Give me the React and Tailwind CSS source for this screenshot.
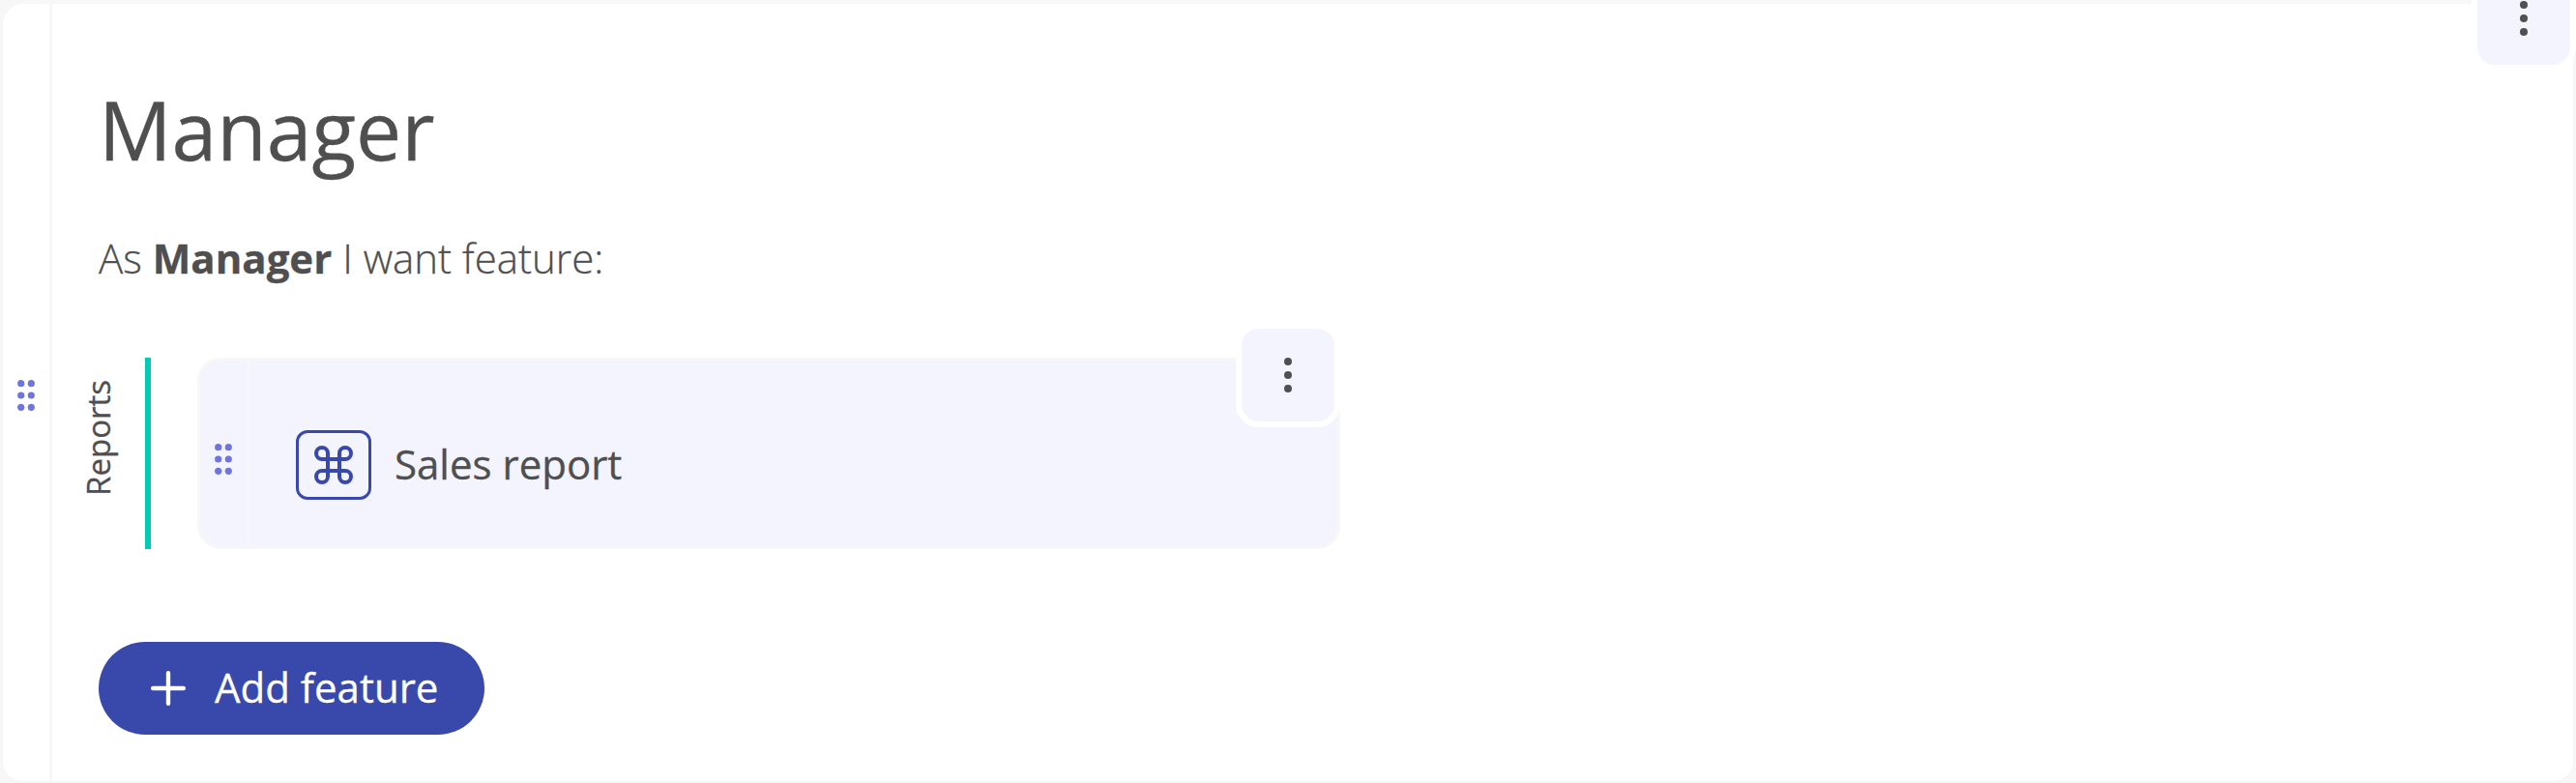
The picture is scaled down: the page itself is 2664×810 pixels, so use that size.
import { Command } from "lucide-react";

function DragDots() {
  return (
    <svg className="block h-[34px] w-[20px]" viewBox="0 0 20 34" fill="#7075de">
      {[4.7, 17, 29.3].map((y) => (
        <g key={y}>
          <circle cx="4.7" cy={y} r="3.6" />
          <circle cx="15.3" cy={y} r="3.6" />
        </g>
      ))}
    </svg>
  );
}

function MenuButton({ className }) {
  return (
    <button
      aria-label="Options"
      className={
        "absolute flex size-[108px] items-center justify-center rounded-[24px] border-6 border-white bg-[#f3f4fd] " +
        className
      }
    >
      <svg className="block h-9 w-2" viewBox="0 0 8 36" fill="#505050">
        <circle cx="4" cy="4" r="4" />
        <circle cx="4" cy="18" r="4" />
        <circle cx="4" cy="32" r="4" />
      </svg>
    </button>
  );
}

function FeatureCard() {
  return (
    <div className="relative ml-12 flex h-[198px] w-[1182px] rounded-[24px] border-3 border-[#f7f7f7] bg-[#f3f4fd]">
      <div className="flex w-[51px] shrink-0 justify-center border-r-3 border-[#f7f7f7] pt-[85px]">
        <DragDots />
      </div>
      <div className="flex items-start pt-[72px] pl-12">
        <div className="flex h-[72px] w-[78px] items-center justify-center rounded-[12px] border-3 border-[#3949ab]">
          <Command size={48} strokeWidth={2} color="#3949ab" />
        </div>
        <span className="-mt-px ml-6 text-[42px] leading-[71px]">Sales report</span>
      </div>
      <MenuButton className="-top-[39px] -right-[3px]" />
    </div>
  );
}

export default function App() {
  return (
    <div className="h-[810px] w-[2664px] overflow-hidden bg-[#f7f7f7] pt-px font-['Open_Sans',sans-serif] text-[#4f4f4f] [-webkit-text-stroke:0.3px]">
      <div className="relative flex h-[810px] w-[2664px] rounded-[24px] border-3 border-[#f7f7f7] bg-white">
        <div className="flex w-[51px] shrink-0 justify-center border-r-3 border-[#f7f7f7] pt-[388px]">
          <DragDots />
        </div>
        <div className="flex flex-col items-start pl-12">
          <h1 className="mt-[69px] h-[121px] text-[84px] leading-[121px]">Manager</h1>
          <p className="mt-[37px] h-[71px] text-[42px] leading-[71px] font-light">
            As <b className="font-bold">Manager</b> I want feature:
          </p>
          <div className="mt-[68px] flex">
            <div className="flex h-[198px] w-[54px] items-center border-r-6 border-[#00ccb4]">
              <span className="-ml-[23px] rotate-180 pt-[32px] text-[33px] leading-[45px] [writing-mode:vertical-rl]">
                Reports
              </span>
            </div>
            <FeatureCard />
          </div>
          <button className="mt-24 flex h-24 w-[399px] items-start rounded-full bg-[#3949ab] pl-[54px] text-[42px] leading-[63px] text-white">
            <svg className="mt-[30px] block size-9" viewBox="0 0 36 36" stroke="currentColor" strokeWidth="4.4" strokeLinecap="round">
              <path d="M18 2.2v31.6M2.2 18h31.6" />
            </svg>
            <span className="mt-[15px] ml-[30px] whitespace-nowrap">Add feature</span>
          </button>
        </div>
        <MenuButton className="-top-[39px] -right-[3px]" />
      </div>
    </div>
  );
}
